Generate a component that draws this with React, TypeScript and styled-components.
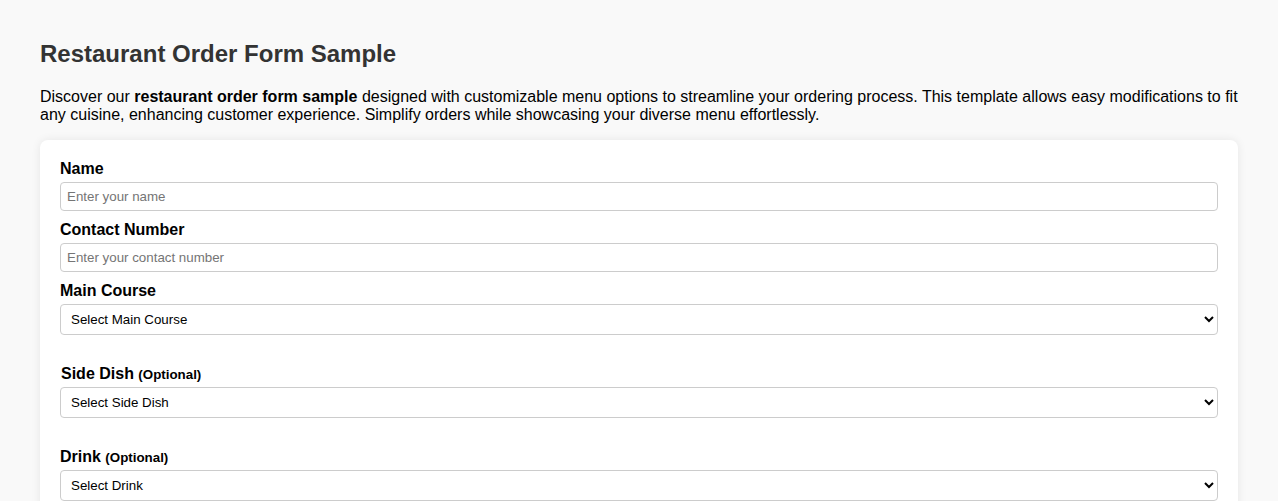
import React from "react";
import styled, { createGlobalStyle } from "styled-components";

const GlobalStyle = createGlobalStyle`
  html, body {
    margin: 0;
    padding: 0;
    background: #f9f9f9;
  }
  body {
    font-family: "Liberation Sans", Arial, sans-serif;
    color: #000;
  }
  * { box-sizing: border-box; }
`;

const Page = styled.div`
  padding: 40px 40px 40px 40px;
`;

const Title = styled.h1`
  margin: 0;
  font-size: 24px;
  line-height: 28px;
  font-weight: bold;
  color: #333;
`;

const Intro = styled.p`
  margin: 20px 0 16px 0;
  font-size: 16px;
  line-height: 18px;
`;

const Card = styled.form`
  background: #fff;
  border-radius: 8px;
  box-shadow: 0 0 10px rgba(0, 0, 0, 0.08);
  padding: 20px 20px 20px 20px;
`;

const Group = styled.div<{ $gap: number }>`
  margin-bottom: ${(p) => p.$gap}px;
`;

const Label = styled.label<{ $indent?: boolean }>`
  display: block;
  height: 18px;
  font-size: 16px;
  line-height: 18px;
  font-weight: bold;
  margin-bottom: 4px;
  padding-left: ${(p) => (p.$indent ? 1 : 0)}px;
`;

const Optional = styled.span`
  font-size: 13.333px;
  line-height: 1;
`;

const TextInput = styled.input`
  display: block;
  width: 100%;
  height: 29px;
  padding: 6px;
  border: 1px solid #ccc;
  border-radius: 4px;
  font-family: "Liberation Sans", Arial, sans-serif;
  font-size: 13.333px;
  color: #000;
  background: #fff;
  &::placeholder { color: #757575; }
`;

const Select = styled.select`
  display: block;
  width: 100%;
  height: 31px;
  padding: 6px;
  border: 1px solid #ccc;
  border-radius: 4px;
  font-family: "Liberation Sans", Arial, sans-serif;
  font-size: 13.333px;
  color: #000;
  background: #fff;
`;

export default function App() {
  return (
    <>
      <GlobalStyle />
      <Page>
        <Title>Restaurant Order Form Sample</Title>
        <Intro>
          Discover our <strong>restaurant order form sample</strong> designed with customizable menu
          options to streamline your ordering process. This template allows easy modifications to fit
          any cuisine, enhancing customer experience. Simplify orders while showcasing your diverse
          menu effortlessly.
        </Intro>
        <Card onSubmit={(e) => e.preventDefault()}>
          <Group $gap={10}>
            <Label htmlFor="name">Name</Label>
            <TextInput id="name" type="text" placeholder="Enter your name" />
          </Group>
          <Group $gap={10}>
            <Label htmlFor="contact">Contact Number</Label>
            <TextInput id="contact" type="tel" placeholder="Enter your contact number" />
          </Group>
          <Group $gap={30}>
            <Label htmlFor="main">Main Course</Label>
            <Select id="main" defaultValue="">
              <option value="">Select Main Course</option>
              <option>Grilled Chicken</option>
              <option>Beef Steak</option>
              <option>Vegetable Pasta</option>
            </Select>
          </Group>
          <Group $gap={30}>
            <Label htmlFor="side" $indent>
              Side Dish <Optional>(Optional)</Optional>
            </Label>
            <Select id="side" defaultValue="">
              <option value="">Select Side Dish</option>
              <option>French Fries</option>
              <option>Garden Salad</option>
            </Select>
          </Group>
          <Group $gap={30}>
            <Label htmlFor="drink">
              Drink <Optional>(Optional)</Optional>
            </Label>
            <Select id="drink" defaultValue="">
              <option value="">Select Drink</option>
              <option>Water</option>
              <option>Soda</option>
            </Select>
          </Group>
        </Card>
      </Page>
    </>
  );
}
